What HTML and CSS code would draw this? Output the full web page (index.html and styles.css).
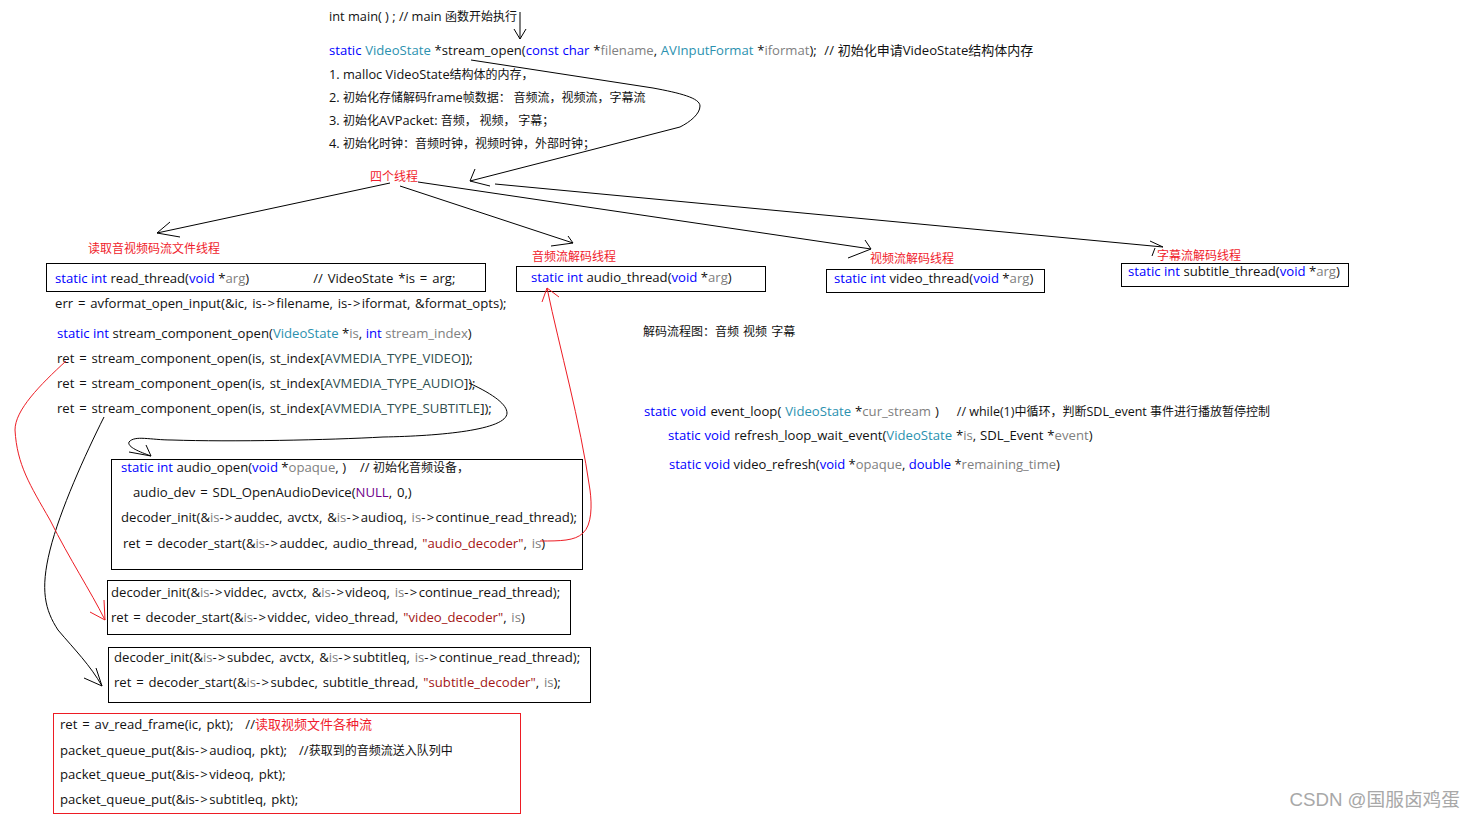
FILE: index.html
```html
<!DOCTYPE html>
<html lang="zh">
<head>
<meta charset="utf-8">
<title>ffplay</title>
<link rel="stylesheet" href="styles.css">
</head>
<body>
<main class="canvas">
  <div class="node n-main">
    <div class="line intro">int main( ) ; // main <span class="c">函数开始执行</span></div>
    <div class="line l-open"><span class="k">static</span> <span class="t">VideoState</span> *stream_open(<span class="k">const char</span> *<span class="p">filename</span>, <span class="t">AVInputFormat</span> *<span class="p">iformat</span>);  // <span class="c13">初始化申请</span>VideoState<span class="c13">结构体内存</span></div>
    <div class="line intro l-s1">1. malloc VideoState<span class="c">结构体的内存，</span></div>
    <div class="line intro l-s2">2. <span class="c">初始化存储解码</span>frame<span class="c">帧数据： 音频流，视频流，字幕流</span></div>
    <div class="line intro l-s2">3. <span class="c">初始化</span>AVPacket: <span class="c">音频， 视频， 字幕；</span></div>
    <div class="line intro l-s2">4. <span class="c">初始化时钟：音频时钟，视频时钟，外部时钟；</span></div>
  </div>

  <div class="node red-label n-four">四个线程</div>
  <div class="node red-label n-read-label">读取音视频码流文件线程</div>
  <div class="node red-label n-audio-label">音频流解码线程</div>
  <div class="node red-label n-video-label">视频流解码线程</div>
  <div class="node red-label n-sub-label">字幕流解码线程</div>

  <div class="node box b-read">
    <div class="line"><span class="k">static int</span> read_thread(<span class="k">void</span> *<span class="p">arg</span>)<span class="cmt code">// VideoState *is = arg;</span></div>
  </div>
  <div class="node box b-audio"><div class="line"><span class="k">static int</span> audio_thread(<span class="k">void</span> *<span class="p">arg</span>)</div></div>
  <div class="node box b-video"><div class="line"><span class="k">static int</span> video_thread(<span class="k">void</span> *<span class="p">arg</span>)</div></div>
  <div class="node box b-sub"><div class="line l-first"><span class="k">static int</span> subtitle_thread(<span class="k">void</span> *<span class="p">arg</span>)</div></div>

  <div class="node line code n-err">err = avformat_open_input(&amp;ic, is<span class="ar">-&gt;</span>filename, is<span class="ar">-&gt;</span>iformat, &amp;format_opts);</div>

  <div class="node stack n-stream">
    <div class="line"><span class="k">static int</span> stream_component_open(<span class="t">VideoState</span> *<span class="p">is</span>, <span class="k">int</span> <span class="p">stream_index</span>)</div>
    <div class="line code">ret = stream_component_open(is, st_index[<span class="e">AVMEDIA_TYPE_VIDEO</span>]);</div>
    <div class="line code">ret = stream_component_open(is, st_index[<span class="e">AVMEDIA_TYPE_AUDIO</span>]);</div>
    <div class="line code">ret = stream_component_open(is, st_index[<span class="e">AVMEDIA_TYPE_SUBTITLE</span>]);</div>
  </div>

  <div class="node box stack b-open">
    <div class="line l-first"><span class="k">static int</span> audio_open(<span class="k">void</span> *<span class="p">opaque</span>, )<span class="gap"></span>// <span class="c">初始化音频设备，</span></div>
    <div class="line code ind-12">audio_dev = SDL_OpenAudioDevice(<span class="m">NULL</span>, 0,)</div>
    <div class="line code">decoder_init(&amp;<span class="p">is</span><span class="ar">-&gt;</span>auddec, avctx, &amp;<span class="p">is</span><span class="ar">-&gt;</span>audioq, <span class="p">is</span><span class="ar">-&gt;</span>continue_read_thread);</div>
    <div class="line code ind-2 l-down">ret = decoder_start(&amp;<span class="p">is</span><span class="ar">-&gt;</span>auddec, audio_thread, <span class="s">"audio_decoder"</span>, <span class="p">is</span>)</div>
  </div>

  <div class="node box stack b-dvid">
    <div class="line code">decoder_init(&amp;<span class="p">is</span><span class="ar">-&gt;</span>viddec, avctx, &amp;<span class="p">is</span><span class="ar">-&gt;</span>videoq, <span class="p">is</span><span class="ar">-&gt;</span>continue_read_thread);</div>
    <div class="line code">ret = decoder_start(&amp;<span class="p">is</span><span class="ar">-&gt;</span>viddec, video_thread, <span class="s">"video_decoder"</span>, <span class="p">is</span>)</div>
  </div>

  <div class="node box stack b-dsub">
    <div class="line code">decoder_init(&amp;<span class="p">is</span><span class="ar">-&gt;</span>subdec, avctx, &amp;<span class="p">is</span><span class="ar">-&gt;</span>subtitleq, <span class="p">is</span><span class="ar">-&gt;</span>continue_read_thread);</div>
    <div class="line code">ret = decoder_start(&amp;<span class="p">is</span><span class="ar">-&gt;</span>subdec, subtitle_thread, <span class="s">"subtitle_decoder"</span>, <span class="p">is</span>);</div>
  </div>

  <div class="node box box-red stack b-frame">
    <div class="line code">ret = av_read_frame(ic, pkt);<span class="gap-s"></span>//<span class="c13 red">读取视频文件各种流</span></div>
    <div class="line code l-up">packet_queue_put(&amp;is<span class="ar">-&gt;</span>audioq, pkt);<span class="gap-s"></span>//<span class="c">获取到的音频流送入队列中</span></div>
    <div class="line code l-back">packet_queue_put(&amp;is<span class="ar">-&gt;</span>videoq, pkt);</div>
    <div class="line code">packet_queue_put(&amp;is<span class="ar">-&gt;</span>subtitleq, pkt);</div>
  </div>

  <div class="node line code n-flow"><span class="c">解码流程图：音频 视频 字幕</span></div>

  <div class="node line n-loop"><span class="k">static void</span> event_loop( <span class="t">VideoState</span> *<span class="p">cur_stream</span> )<span class="gap-l"></span><span class="tight">// while(1)<span class="c">中循环，判断</span>SDL_event <span class="c">事件进行播放暂停控制</span></span></div>
  <div class="node line n-refresh"><span class="k">static void</span> refresh_loop_wait_event(<span class="t">VideoState</span> *<span class="p">is</span>, SDL_Event *<span class="p">event</span>)</div>
  <div class="node line n-vrefresh"><span class="k">static void</span> video_refresh(<span class="k">void</span> *<span class="p">opaque</span>, <span class="k">double</span> *<span class="p">remaining_time</span>)</div>

  <svg class="arrows" width="1475" height="820" viewBox="0 0 1475 820" aria-hidden="true">
    <g class="ink">
      <path d="M520 12V39M514 29L520 39L526 29"/>
      <path d="M471 60L653 88C680 93 700 98 700 106C700 114 690 122 680 127L587 151L470 181M475 169L470 181L490 186"/>
      <path d="M390 183L157 233M170 222L157 233L180 237"/>
      <path d="M400 186L573 243M568 236L573 243L551 246"/>
      <path d="M418 182L871 249M865 240L871 249L848 258"/>
      <path d="M495 184L1163 247M1150 241L1163 247M1152 256L1155 248"/>
      <path d="M469 383C495 395 507 405 507 413C507 430 440 436 383 437C330 440 230 442 172 440C150 440 135 435 129 442C127 447 140 452 151 456M146 445L151 456L129 452"/>
      <path d="M104 417C85 455 60 510 50 550C40 590 45 610 58 630C75 650 90 665 102 686M96 668L102 686L84 678"/>
    </g>
    <g class="ink-red">
      <path d="M66 361C40 385 15 410 15 430C17 465 30 485 50 520C70 560 90 590 105 620M104 600L105 620L90 612"/>
      <path d="M540 541C560 541 575 541 583 533C592 525 592 505 590 490C580 420 560 350 547 288M542 302L547 288L559 297"/>
    </g>
  </svg>

  <div class="node watermark">CSDN @国服卤鸡蛋</div>
</main>
</body>
</html>
```

FILE: styles.css
```css
html, body { margin: 0; padding: 0; background: #fff; }
body { overflow: hidden; }
.canvas {
  position: relative;
  width: 1475px;
  height: 820px;
  overflow: hidden;
  font-family: "Open Sans", "Noto Sans CJK SC", sans-serif;
  font-size: 13.15px;
  color: #111;
}
.node { position: absolute; }
.line { line-height: 16px; height: 16px; white-space: pre; }
.intro { font-size: 12.8px; margin-left: -1px; }
.code { word-spacing: 1.4px; }
.ar { letter-spacing: 1.3px; }
.tight { font-size: 12.5px; word-spacing: 0; }
.c { font-family: "Noto Sans CJK SC", sans-serif; font-size: 12px; }
.c13 { font-family: "Noto Sans CJK SC", sans-serif; font-size: 13px; }
.k { color: #0000ff; }
.t { color: #2b91af; }
.p { color: #808080; }
.e { color: #2f4f4f; }
.m { color: #6f008a; }
.s { color: #a31515; }
.red { color: #f01c2c; }
.red-label { font-family: "Noto Sans CJK SC", sans-serif; font-size: 12px; line-height: 16px; color: #f01c2c; white-space: pre; }
.gap { display: inline-block; width: 14px; }
.gap-l { display: inline-block; width: 18px; }
.gap-s { display: inline-block; width: 12px; }
.cmt { margin-left: 64px; }
.stack { display: flex; flex-direction: column; gap: 9px; }
.box { border: 1px solid #000; box-sizing: border-box; background: transparent; }
.box-red { border-color: #ed1c24; }

.n-main { left: 330px; top: 8px; }
.l-open { margin-top: 18px; margin-left: -1px; font-size: 13.1px; word-spacing: 0.4px; }
.l-s1 { margin-top: 8px; }
.l-s2 { margin-top: 7px; }
.l-first { margin-top: -1px; }

.n-four { left: 370px; top: 168px; }
.n-read-label { left: 88px; top: 240px; }
.n-audio-label { left: 532px; top: 248px; }
.n-video-label { left: 870px; top: 250px; }
.n-sub-label { left: 1157px; top: 247px; }

.b-read { left: 46px; top: 263px; width: 440px; height: 29px; padding: 6px 0 0 8px; }
.b-audio { left: 516px; top: 266px; width: 250px; height: 26px; padding: 2px 0 0 14px; }
.b-video { left: 826px; top: 269px; width: 219px; height: 24px; padding: 0 0 0 7px; }
.b-sub { left: 1121px; top: 263px; width: 228px; height: 24px; padding: 0 0 0 6px; }

.n-err { left: 55px; top: 295px; }
.n-stream { left: 57px; top: 325px; }

.b-open { left: 111px; top: 459px; width: 472px; height: 111px; padding: 0 0 0 9px; }
.ind-12 { margin-left: 12px; }
.ind-2 { margin-left: 2px; }
.l-down { margin-top: 1px; }
.b-dvid { left: 107px; top: 580px; width: 464px; height: 55px; padding: 3px 0 0 3px; }
.b-dsub { left: 108px; top: 647px; width: 483px; height: 56px; padding: 1px 0 0 5px; }
.b-frame { left: 53px; top: 713px; width: 468px; height: 101px; padding: 2px 0 0 6px; }
.l-up { margin-top: 1px; }
.l-back { margin-top: -1px; }

.n-flow { left: 643px; top: 323px; }
.n-loop { left: 644px; top: 403px; word-spacing: 0.6px; }
.n-refresh { left: 668px; top: 427px; word-spacing: 0.5px; }
.n-vrefresh { left: 669px; top: 456px; font-size: 13px; }

.arrows { position: absolute; left: 0; top: 0; pointer-events: none; }
.ink, .ink-red { fill: none; stroke-width: 1; }
.ink { stroke: #000; }
.ink-red { stroke: #ed1c24; }

.watermark {
  right: 15px;
  top: 788px;
  font-family: "Liberation Sans", "Noto Sans CJK SC", sans-serif;
  font-size: 18.7px;
  line-height: 24px;
  color: #a8a8a8;
  white-space: pre;
}
```
